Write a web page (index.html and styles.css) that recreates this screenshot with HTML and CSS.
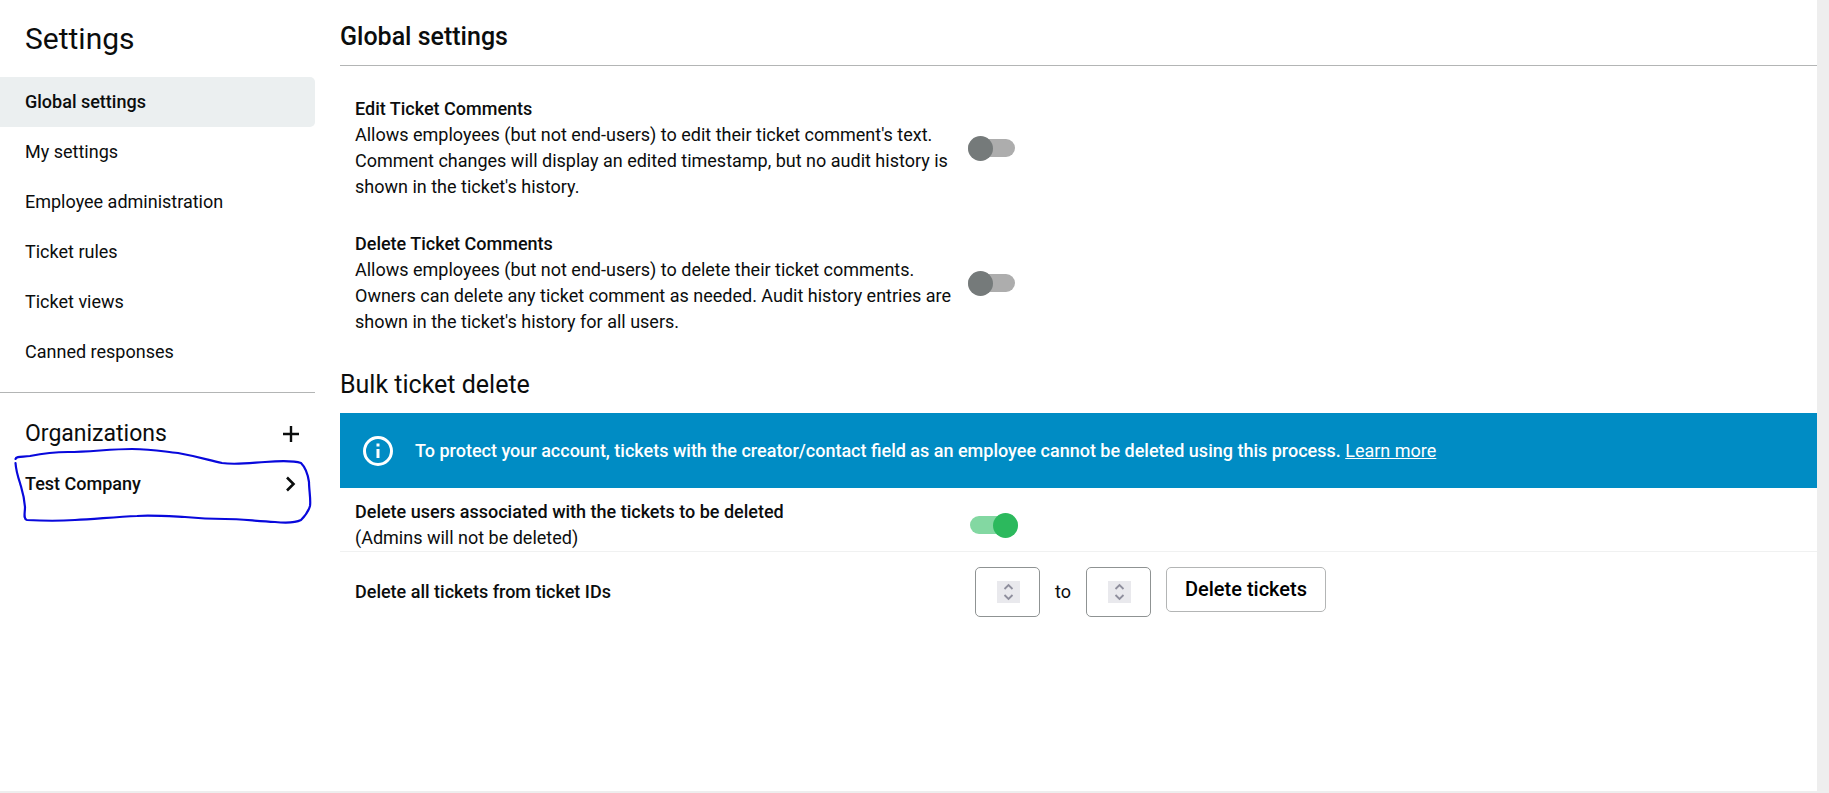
FILE: index.html
```html
<!DOCTYPE html>
<html lang="en">
<head>
<meta charset="utf-8">
<title>Settings</title>
<link rel="stylesheet" href="styles.css">
</head>
<body>
<div class="app">
  <aside class="sidebar">
    <h1 class="sidebar-title">Settings</h1>
    <nav class="nav">
      <a class="nav-item active" href="#global">Global settings</a>
      <a class="nav-item" href="#my">My settings</a>
      <a class="nav-item" href="#employees">Employee administration</a>
      <a class="nav-item" href="#rules">Ticket rules</a>
      <a class="nav-item" href="#views">Ticket views</a>
      <a class="nav-item" href="#canned">Canned responses</a>
    </nav>
    <section class="orgs">
      <header class="orgs-head">
        <h2 class="orgs-title">Organizations</h2>
        <button class="icon-btn" type="button" aria-label="Add organization">
          <svg width="18" height="18" viewBox="0 0 18 18"><path d="M9 1v16M1 9h16" fill="none" stroke="#0b0d0d" stroke-width="2.4"/></svg>
        </button>
      </header>
      <a class="org" href="#test-company">Test Company
        <svg width="18" height="18" viewBox="0 0 18 18"><path d="M5 2.5l6.5 6.5L5 15.5" fill="none" stroke="#0b0d0d" stroke-width="2.6"/></svg>
      </a>
      <svg class="scribble" width="315" height="90" viewBox="0 440 315 90" aria-hidden="true">
        <path d="M15.5 459C16 456 22 457 30 456C45 453 55 452 68 452C90 452 110 449 132 449C155 449 165 452 178 453C200 457 208 460 222 463C235 465 250 463 265 462C278 461 295 461 301 463C306 468 308 475 309 482C309 490 311 500 310 506C308 513 304 517 301 520C295 523 285 523 275 522C255 521 240 519 225 519C205 519 195 518 185 517C165 516 150 515 137 516C115 517 95 519 75 520C60 521 45 521 27 520C23 519 25 513 25 507C24 495 22 490 20 483C17 474 16 470 15.5 463" fill="none" stroke="#0808dc" stroke-width="2.2" stroke-linecap="round" stroke-linejoin="round"/>
      </svg>
    </section>
  </aside>

  <main class="main">
    <h2 class="page-title">Global settings</h2>
    <div class="settings">
      <div class="setting">
        <label class="setting-text" for="edit-comments"><strong>Edit Ticket Comments</strong>
          <span>Allows employees (but not end-users) to edit their ticket comment's text. Comment changes will display an edited timestamp, but no audit history is shown in the ticket's history.</span></label>
        <input class="toggle" id="edit-comments" type="checkbox">
      </div>
      <div class="setting">
        <label class="setting-text" for="delete-comments"><strong>Delete Ticket Comments</strong>
          <span>Allows employees (but not end-users) to delete their ticket comments. Owners can delete any ticket comment as needed. Audit history entries are shown in the ticket's history for all users.</span></label>
        <input class="toggle" id="delete-comments" type="checkbox">
      </div>
    </div>

    <h2 class="section-title">Bulk ticket delete</h2>
    <div class="banner">
      <svg class="banner-icon" width="30" height="30" viewBox="0 0 30 30"><circle cx="15" cy="15" r="13.5" fill="none" stroke="#fff" stroke-width="3"/><path d="M13.5 7.5h3v3h-3zM13.5 13h3v9h-3z" fill="#fff"/></svg>
      <p class="banner-text"><strong>To protect your account, tickets with the creator/contact field as an employee cannot be deleted using this process.</strong> <a href="#learn">Learn more</a></p>
    </div>
    <div class="bulk-row">
      <label class="setting-text" for="delete-users"><strong>Delete users associated with the tickets to be deleted</strong>
        <span>(Admins will not be deleted)</span></label>
      <input class="toggle" id="delete-users" type="checkbox" checked>
    </div>
    <form class="range-row">
      <label class="range-label" for="id-from">Delete all tickets from ticket IDs</label>
      <div class="range">
        <span class="number">
          <input id="id-from" type="number">
          <svg class="stepper" width="23" height="22" viewBox="0 0 23 22"><path d="M7.5 8l4-4 4 4M7.5 14l4 4 4-4" fill="none" stroke="#8f8f9d" stroke-width="1.8"/></svg>
        </span>
        <label for="id-to">to</label>
        <span class="number">
          <input id="id-to" type="number">
          <svg class="stepper" width="23" height="22" viewBox="0 0 23 22"><path d="M7.5 8l4-4 4 4M7.5 14l4 4 4-4" fill="none" stroke="#8f8f9d" stroke-width="1.8"/></svg>
        </span>
        <button class="btn" type="button">Delete tickets</button>
      </div>
    </form>
  </main>
</div>
</body>
</html>
```
FILE: styles.css
```css
* { box-sizing: border-box; }

body {
  margin: 0;
  padding: 0 12px 2px 0;
  min-height: 100vh;
  display: flex;
  background: #eee;
  color: #0b0d0d;
  font: 400 18px/26px Roboto, sans-serif;
}

h1, h2, p { margin: 0; font-weight: 400; }
strong { font-weight: 500; }

.app {
  flex: 1;
  display: grid;
  grid-template-columns: 315px minmax(0, 1fr);
  column-gap: 25px;
  background: #fff;
}

.sidebar-title {
  padding: 21px 25px 20px;
  font-size: 30px;
  line-height: 36px;
}

.nav {
  display: flex;
  flex-direction: column;
  padding-bottom: 15px;
  border-bottom: 1px solid #b3b5b5;
}

.nav-item, .org {
  display: flex;
  align-items: center;
  height: 50px;
  padding: 0 25px;
  color: inherit;
  text-decoration: none;
}

.nav-item.active {
  background: #ebeff0;
  border-radius: 0 5px 5px 0;
  font-weight: 500;
}

.orgs { position: relative; padding-top: 16px; }

.orgs-head {
  display: flex;
  align-items: center;
  justify-content: space-between;
  height: 50px;
  padding: 0 15px 0 25px;
}

.orgs-title { font-size: 23px; line-height: 30px; }

.icon-btn {
  display: flex;
  padding: 0;
  border: 0;
  background: none;
}

.org {
  justify-content: space-between;
  padding-right: 15px;
  font-weight: 500;
}

.scribble {
  position: absolute;
  top: 47px;
  left: 0;
  pointer-events: none;
}

.page-title {
  padding: 21px 0 12px;
  border-bottom: 1px solid #b3b5b5;
  font-size: 25px;
  line-height: 32px;
  font-weight: 500;
}

.settings {
  display: flex;
  flex-direction: column;
  gap: 31px;
  padding: 30px 0 34px 15px;
}

.setting, .bulk-row, .range-row {
  display: grid;
  grid-template-columns: 600px auto;
  column-gap: 13px;
  align-items: center;
  justify-content: start;
}

.setting-text strong, .setting-text span { display: block; }

.toggle {
  appearance: none;
  display: grid;
  align-items: center;
  width: 47px;
  height: 25px;
  margin: 0;
}

.toggle::before, .toggle::after { content: ""; grid-area: 1 / 1; }

.toggle::before {
  height: 18px;
  border-radius: 9px;
  background: #adadad;
}

.toggle::after {
  width: 25px;
  height: 25px;
  border-radius: 50%;
  background: #757a7a;
}

.toggle:checked { width: 48px; }
.toggle:checked::before { background: #83d8a2; }
.toggle:checked::after { justify-self: end; background: #2cb95d; }

.section-title {
  padding-bottom: 12px;
  font-size: 25px;
  line-height: 32px;
}

.banner {
  display: flex;
  align-items: center;
  gap: 22px;
  min-height: 75px;
  padding: 12px 23px;
  background: #008cc4;
  color: #fff;
}

.banner-icon { flex: none; }
.banner a { color: inherit; }

.bulk-row {
  padding: 11px 0 0 15px;
  column-gap: 15px;
  border-bottom: 1px solid #f0f1f1;
}

.range-row { padding: 15px 0 0 15px; column-gap: 20px; }
.range-label { font-weight: 500; }
.range { display: flex; align-items: center; gap: 15px; }

.number {
  display: flex;
  align-items: center;
  width: 65px;
  height: 50px;
  padding-right: 19px;
  border: 1px solid #8f9393;
  border-radius: 5px;
}

.number input {
  flex: 1;
  min-width: 0;
  height: 100%;
  padding: 0;
  border: 0;
  outline: 0;
  background: none;
  font: inherit;
  appearance: textfield;
}

.stepper { flex: none; background: #e9e9ed; }

.btn {
  align-self: flex-start;
  height: 45px;
  padding: 0 18px;
  border: 1px solid #b3b5b5;
  border-radius: 5px;
  background: #fff;
  color: #000;
  font: 500 20px/27px Roboto, sans-serif;
}
```
